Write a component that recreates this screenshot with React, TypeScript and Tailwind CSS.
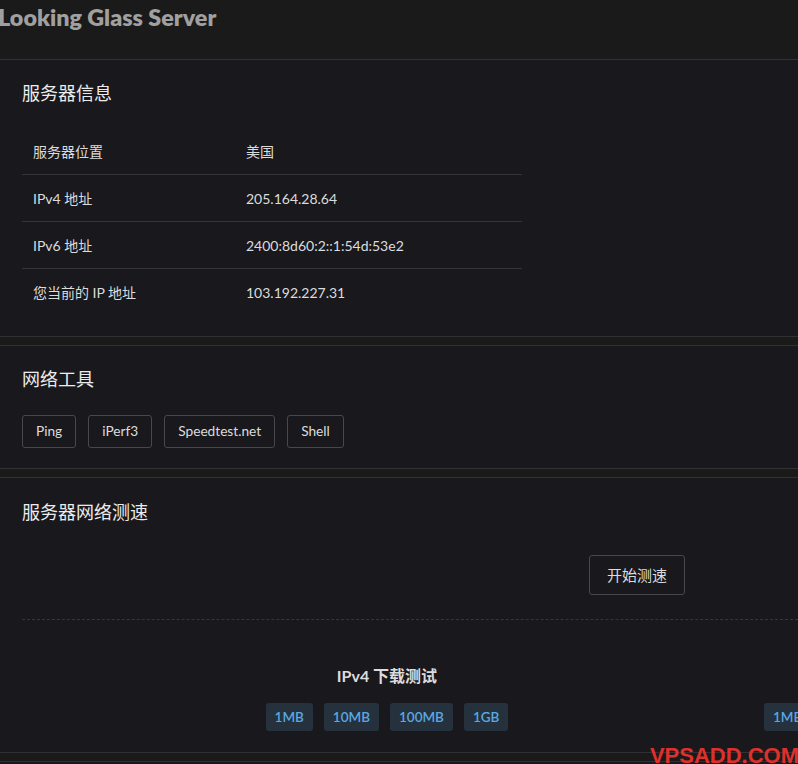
import React from 'react';

const font = { fontFamily: 'Lato, "Noto Sans CJK SC", sans-serif' };

const InfoRow: React.FC<{ label: string; value: string; last?: boolean }> = ({ label, value, last }) => (
    <div className={`flex h-[47px] items-center text-[14px] text-[#dcdcdc] ${last ? '' : 'border-b border-[#343438]'}`}>
        <div className="w-[224px] pl-[11px]">{label}</div>
        <div>{value}</div>
    </div>
);

const ToolButton: React.FC<{ label: string }> = ({ label }) => (
    <button className="h-[33px] px-[13px] rounded-[3px] border border-[#48484c] text-[13.7px] text-[#dcdcdc]">
        {label}
    </button>
);

const SizeButton: React.FC<{ label: string }> = ({ label }) => (
    <button className="h-[28px] px-[9px] rounded-[3px] bg-[#25323d] text-[13.5px] font-semibold text-[#5aa8e2]">
        {label}
    </button>
);

const Card: React.FC<{ children: React.ReactNode; className?: string }> = ({ children, className }) => (
    <section className={`bg-[#19181d] border-y border-[#313135] px-[22px] ${className ?? ''}`}>{children}</section>
);

export default function App() {
    const sizes = ['1MB', '10MB', '100MB', '1GB'];
    return (
        <div style={font} className="relative w-[798px] h-[764px] overflow-hidden bg-[#1a1a1a]">
            <header className="h-[59px]">
                <h1 className="ml-[-2px] pt-[3px] text-[23.3px] font-extrabold text-[#a0a0a0] leading-[28px] whitespace-nowrap">Looking Glass Server</h1>
            </header>

            <Card className="pt-[20px] pb-[20px] mb-[8px]">
                <h2 className="text-[18px] leading-[27px] text-[#ececec]">服务器信息</h2>
                <div className="mt-[21px] w-[500px]">
                    <InfoRow label="服务器位置" value="美国" />
                    <InfoRow label="IPv4 地址" value="205.164.28.64" />
                    <InfoRow label="IPv6 地址" value="2400:8d60:2::1:54d:53e2" />
                    <InfoRow label="您当前的 IP 地址" value="103.192.227.31" last />
                </div>
            </Card>

            <Card className="pt-[20px] pb-[20px] mb-[8px]">
                <h2 className="text-[18px] leading-[27px] text-[#ececec]">网络工具</h2>
                <div className="mt-[22px] flex gap-[12px]">
                    <ToolButton label="Ping" />
                    <ToolButton label="iPerf3" />
                    <ToolButton label="Speedtest.net" />
                    <ToolButton label="Shell" />
                </div>
            </Card>

            <Card className="pt-[21px] pb-[21px] mb-[8px] pr-0">
                <h2 className="text-[18px] leading-[27px] text-[#ececec]">服务器网络测速</h2>
                <div className="mt-[29px] pl-[567px]">
                    <button className="h-[40px] w-[96px] rounded-[3px] border border-[#48484c] text-[15px] text-[#dcdcdc]">开始测速</button>
                </div>
                <div className="mt-[24px] border-t border-dashed border-[#37373b]" />
                <div className="mt-[47px] flex">
                    <div className="w-[730px] shrink-0 flex flex-col items-center">
                        <div className="text-[16px] font-bold leading-[18px] text-[#dcdcdc]">IPv4 下载测试</div>
                        <div className="mt-[18px] flex gap-[11px]">
                            {sizes.map(s => <SizeButton key={s} label={s} />)}
                        </div>
                    </div>
                    <div className="ml-[12px] w-[244px] shrink-0 flex flex-col items-start">
                        <div className="text-[16px] font-bold leading-[18px] text-[#dcdcdc] whitespace-nowrap invisible">IPv6 下载测试</div>
                        <div className="mt-[18px] flex gap-[11px]">
                            {sizes.map(s => <SizeButton key={s} label={s} />)}
                        </div>
                    </div>
                </div>
            </Card>

            <Card className="h-[40px]">{null}</Card>

            <div className="absolute right-[-1px] top-[745px] text-[22px] leading-none font-bold whitespace-nowrap text-[#e0302b]" style={{ fontFamily: '"Liberation Sans", Arial, sans-serif' }}>
                VPSADD.COM
            </div>
        </div>
    );
}
